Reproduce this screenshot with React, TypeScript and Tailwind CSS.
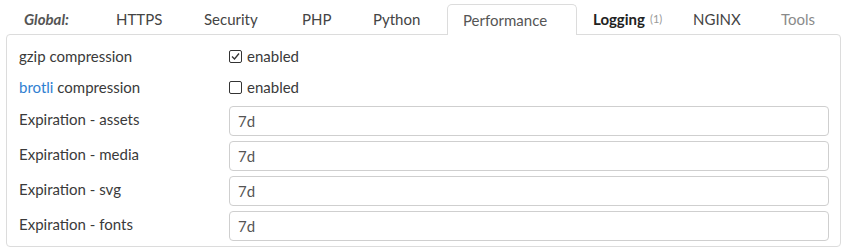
import React from "react";

const tabs: { label: string; w: number; cls?: string; active?: boolean; extra?: string }[] = [
  { label: "Global:", w: 92, cls: "italic font-bold text-[#555]" },
  { label: "HTTPS", w: 88 },
  { label: "Security", w: 98 },
  { label: "PHP", w: 71 },
  { label: "Python", w: 90 },
  { label: "Performance", w: 130, active: true },
  { label: "Logging", w: 100, cls: "font-bold text-[#222]", extra: "(1)" },
  { label: "NGINX", w: 88 },
  { label: "Tools", w: 70, cls: "text-[#8a8a8a]" },
];

function Check({ checked }: { checked: boolean }) {
  return (
    <span className="inline-flex w-[13px] h-[13px] border border-[#333] rounded-[2px] bg-white items-center justify-center">
      {checked && (
        <svg width="11" height="11" viewBox="0 0 11 11">
          <path d="M2 5.5 L4.5 8 L9 2.5" fill="none" stroke="#333" strokeWidth="1.3" />
        </svg>
      )}
    </span>
  );
}

export default function App() {
  const exps = ["assets", "media", "svg", "fonts"];
  return (
    <div className="w-[848px] h-[252px] bg-white text-[15px] text-[#3a3a3a]" style={{ fontFamily: "Lato, 'Noto Sans', sans-serif" }}>
      <div className="flex h-[34px] pl-[8px] relative z-10">
        {tabs.map((t) =>
          t.active ? (
            <div
              key={t.label}
              style={{ width: t.w }}
              className="mt-[4px] h-[31px] border border-b-0 border-[#dcdcdc] rounded-t-[5px] bg-white pl-[15px] flex items-center text-[#555]"
            >
              {t.label}
            </div>
          ) : (
            <div key={t.label} style={{ width: t.w }} className={`pt-[4px] h-[34px] pl-[16px] flex items-center whitespace-nowrap ${t.cls ?? "text-[#444]"}`}>
              {t.label}
              {t.extra && <span className="ml-[5px] text-[11px] font-normal text-[#999]">{t.extra}</span>}
            </div>
          )
        )}
      </div>
      <div className="mx-[6px] w-[835px] h-[213px] border border-[#dcdcdc] rounded-[4px] pl-[12px] pt-[6px] pb-[5px]">
        <div className="flex h-[31px] items-center">
          <div className="w-[210px]">gzip compression</div>
          <label className="flex items-center gap-[5px]">
            <Check checked />
            <span>enabled</span>
          </label>
        </div>
        <div className="flex h-[31px] items-center">
          <div className="w-[210px]">
            <span className="text-[#2f80d1]">brotli</span> compression
          </div>
          <label className="flex items-center gap-[5px]">
            <Check checked={false} />
            <span>enabled</span>
          </label>
        </div>
        <div className="mt-[3px] flex flex-col gap-[5px]">
          {exps.map((e) => (
            <div key={e} className="flex h-[30px]">
              <div className="w-[210px] pt-[2px]">Expiration - {e}</div>
              <div className="w-[600px] h-[30px] border border-[#cfcfcf] rounded-[4px] pl-[8px] flex items-center text-[#555]">7d</div>
            </div>
          ))}
        </div>
      </div>
    </div>
  );
}
